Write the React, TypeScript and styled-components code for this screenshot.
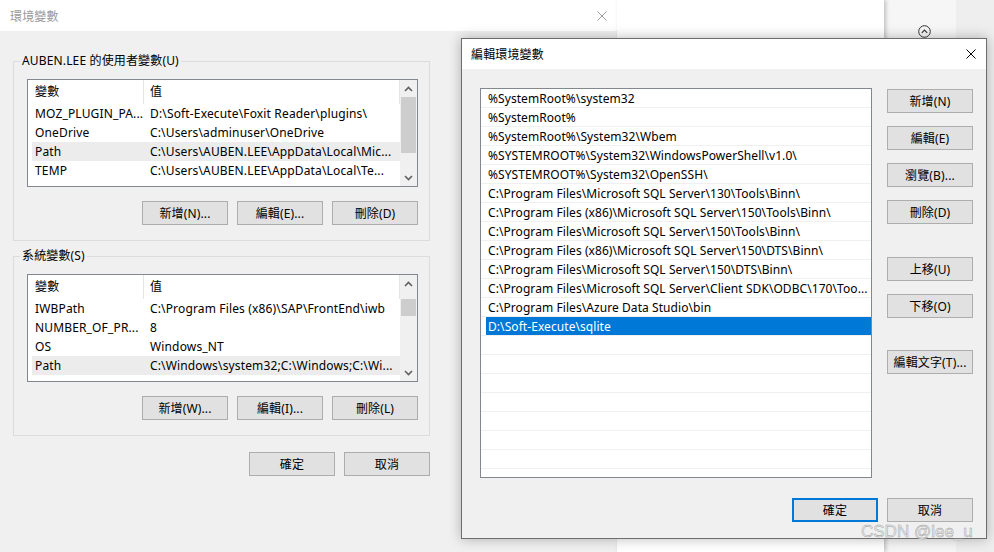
import styled, { createGlobalStyle, css } from "styled-components";

const GlobalStyle = createGlobalStyle`
  html, body { margin: 0; padding: 0; }
  body {
    width: 994px;
    height: 552px;
    overflow: hidden;
    font-family: "Noto Sans", "Noto Sans CJK TC", sans-serif;
    font-size: 12px;
    letter-spacing: 0.15px;
    color: #000;
  }
  * { box-sizing: border-box; }
`;

const Desktop = styled.div`
  position: relative;
  display: flex;
  width: 994px;
  height: 552px;
  overflow: hidden;
  background: #f0f0f0;
`;

const MainWindow = styled.div`
  width: 617px;
  flex: none;
  display: flex;
  flex-direction: column;
  background: #f0f0f0;
`;

const BackWindow = styled.div`
  position: relative;
  z-index: 1;
  width: 267px;
  flex: none;
  background: #fff;
  box-shadow: 2px 0 4px rgba(0, 0, 0, 0.22);
`;

const SidePanel = styled.div`
  flex: 1;
  display: grid;
  grid-template-columns: 72px 1fr;
`;

const SideStrip = styled.div<{ $tone: string }>`
  background: ${(p) => p.$tone};
  padding: 25px 0 0 34px;
`;

const TitleBar = styled.div<{ $height: number; $inactive?: boolean; $pad: number }>`
  height: ${(p) => p.$height}px;
  flex: none;
  display: flex;
  align-items: center;
  justify-content: space-between;
  padding: 0 10px 0 ${(p) => p.$pad}px;
  background: #fff;
  color: ${(p) => (p.$inactive ? "#999" : "#000")};
`;

const MainBody = styled.div`
  flex: 1;
  padding: 22px 0 0 13px;
`;

const Group = styled.fieldset<{ $top?: number }>`
  width: 417px;
  min-width: 0;
  margin: ${(p) => p.$top ?? 0}px 0 0 0;
  padding: 0;
  border: 1px solid #dcdcdc;
`;

const GroupLabel = styled.legend`
  margin-left: 6px;
  padding: 0 2px;
  line-height: 16px;
`;

const GroupContent = styled.div`
  padding: 10px 11px 15px 13px;
`;

const VarList = styled.div`
  display: grid;
  grid-template-columns: 1fr 17px;
  height: 108px;
  border: 1px solid #828790;
  background: #fff;
  overflow: hidden;
`;

const VarColumn = styled.div`
  display: flex;
  flex-direction: column;
  overflow: hidden;
`;

const VarHeader = styled.div`
  display: grid;
  grid-template-columns: 116px 1fr;
  height: 24px;
  line-height: 24px;
  flex: none;
`;

const HeaderCell = styled.div<{ $pad: number }>`
  padding-left: ${(p) => p.$pad}px;
  border-right: 1px solid #e5e5e5;
  white-space: nowrap;
`;

const VarRow = styled.div<{ $selected?: boolean }>`
  display: grid;
  grid-template-columns: 111px 1fr;
  height: 19px;
  line-height: 19px;
  margin-left: 4px;
  flex: none;
  background: ${(p) => (p.$selected ? "#ececec" : "transparent")};
`;

const Cell = styled.div<{ $pad: number }>`
  padding-left: ${(p) => p.$pad}px;
  white-space: nowrap;
  overflow: hidden;
`;

const ScrollTrack = styled.div`
  display: flex;
  flex-direction: column;
  background: #f0f0f0;
`;

const ScrollArrow = styled.div`
  height: 17px;
  flex: none;
  display: flex;
  align-items: center;
  justify-content: center;
`;

const ScrollSpace = styled.div`
  flex: 1;
  padding: 0 1px;
`;

const Thumb = styled.div<{ $offset: number; $size: number }>`
  margin-top: ${(p) => p.$offset}px;
  height: ${(p) => p.$size}px;
  background: #cdcdcd;
`;

const ButtonRow = styled.div<{ $top: number; $width?: number }>`
  display: flex;
  justify-content: flex-end;
  gap: 9px;
  margin-top: ${(p) => p.$top}px;
  width: ${(p) => (p.$width ? `${p.$width}px` : "auto")};
`;

const Button = styled.button<{ $default?: boolean }>`
  width: 86px;
  height: 24px;
  margin: 0;
  padding: 0;
  flex: none;
  font: inherit;
  letter-spacing: inherit;
  color: #000;
  background: #e1e1e1;
  border: 1px solid #adadad;
  white-space: nowrap;
  ${(p) =>
    p.$default &&
    css`
      border: 2px solid #0078d7;
    `}
`;

const EditDialog = styled.div`
  position: absolute;
  z-index: 2;
  left: 461px;
  top: 38px;
  width: 526px;
  height: 501px;
  display: flex;
  flex-direction: column;
  border: 1px solid #6d6d6d;
  background: #f0f0f0;
  box-shadow: 0 0 12px rgba(0, 0, 0, 0.28);
`;

const EditBody = styled.div`
  flex: 1;
  display: grid;
  grid-template-columns: 392px 86px;
  grid-template-rows: 390px auto;
  column-gap: 15px;
  padding: 19px 12px 0 18px;
`;

const PathList = styled.div`
  border: 1px solid #828790;
  background: #fff;
  overflow: hidden;
`;

const PathRow = styled.div`
  height: 19px;
  border-bottom: 1px solid #f0f0f0;
`;

const PathText = styled.div<{ $selected?: boolean }>`
  margin-left: 5px;
  height: 18px;
  line-height: 18px;
  padding: 1px 0 0 2px;
  letter-spacing: 0.07px;
  white-space: nowrap;
  overflow: hidden;
  background: ${(p) => (p.$selected ? "#0078d7" : "transparent")};
  color: ${(p) => (p.$selected ? "#fff" : "#000")};
`;

const SideButtons = styled.div`
  display: flex;
  flex-direction: column;
  padding-top: 1px;
  gap: 13px;
`;

const Spacer = styled.div<{ $size: number }>`
  height: ${(p) => p.$size}px;
  margin-top: -13px;
`;

const Footer = styled.div`
  grid-column: 1 / 3;
  display: flex;
  justify-content: flex-end;
  gap: 9px;
  margin-top: 20px;
`;

const Watermark = styled.div`
  position: absolute;
  z-index: 3;
  left: 861px;
  top: 522px;
  font-family: "Liberation Sans", Arial, sans-serif;
  font-size: 17px;
  line-height: 20px;
  letter-spacing: 0;
  color: #ececec;
  -webkit-text-stroke: 0.45px #9c9c9c;
  white-space: nowrap;
`;

function CloseIcon({ color }: { color: string }) {
  return (
    <svg width="10" height="10" viewBox="0 0 10 10">
      <path d="M0.5 0.5 L9.5 9.5 M9.5 0.5 L0.5 9.5" stroke={color} strokeWidth="1" />
    </svg>
  );
}

function Chevron({ up }: { up: boolean }) {
  return (
    <svg width="9" height="6" viewBox="0 0 9 6">
      <path
        d={up ? "M1 5 L4.5 1.5 L8 5" : "M1 1 L4.5 4.5 L8 1"}
        stroke="#606060"
        strokeWidth="1.6"
        fill="none"
      />
    </svg>
  );
}

function CircleUp() {
  return (
    <svg width="13" height="13" viewBox="0 0 13 13">
      <circle cx="6.5" cy="6.5" r="5.8" stroke="#333" strokeWidth="1" fill="none" />
      <path d="M3.8 7.8 L6.5 5 L9.2 7.8" stroke="#333" strokeWidth="1.1" fill="none" />
    </svg>
  );
}

type VarItem = { name: string; value: string; selected?: boolean };

const userVars: VarItem[] = [
  { name: "MOZ_PLUGIN_PA...", value: "D:\\Soft-Execute\\Foxit Reader\\plugins\\" },
  { name: "OneDrive", value: "C:\\Users\\adminuser\\OneDrive" },
  { name: "Path", value: "C:\\Users\\AUBEN.LEE\\AppData\\Local\\Mic...", selected: true },
  { name: "TEMP", value: "C:\\Users\\AUBEN.LEE\\AppData\\Local\\Te..." },
];

const systemVars: VarItem[] = [
  { name: "IWBPath", value: "C:\\Program Files (x86)\\SAP\\FrontEnd\\iwb" },
  { name: "NUMBER_OF_PR...", value: "8" },
  { name: "OS", value: "Windows_NT" },
  { name: "Path", value: "C:\\Windows\\system32;C:\\Windows;C:\\Wi...", selected: true },
];

const pathEntries = [
  "%SystemRoot%\\system32",
  "%SystemRoot%",
  "%SystemRoot%\\System32\\Wbem",
  "%SYSTEMROOT%\\System32\\WindowsPowerShell\\v1.0\\",
  "%SYSTEMROOT%\\System32\\OpenSSH\\",
  "C:\\Program Files\\Microsoft SQL Server\\130\\Tools\\Binn\\",
  "C:\\Program Files (x86)\\Microsoft SQL Server\\150\\Tools\\Binn\\",
  "C:\\Program Files\\Microsoft SQL Server\\150\\Tools\\Binn\\",
  "C:\\Program Files (x86)\\Microsoft SQL Server\\150\\DTS\\Binn\\",
  "C:\\Program Files\\Microsoft SQL Server\\150\\DTS\\Binn\\",
  "C:\\Program Files\\Microsoft SQL Server\\Client SDK\\ODBC\\170\\Too...",
  "C:\\Program Files\\Azure Data Studio\\bin",
  "D:\\Soft-Execute\\sqlite",
  "", "", "", "", "", "", "", "",
];

interface VariableTableProps {
  items: VarItem[];
  thumbOffset: number;
  thumbSize: number;
}

function VariableTable({ items, thumbOffset, thumbSize }: VariableTableProps) {
  return (
    <VarList>
      <VarColumn>
        <VarHeader>
          <HeaderCell $pad={7}>變數</HeaderCell>
          <HeaderCell $pad={6}>值</HeaderCell>
        </VarHeader>
        {items.map((item) => (
          <VarRow key={item.name} $selected={item.selected}>
            <Cell $pad={3}>{item.name}</Cell>
            <Cell $pad={7}>{item.value}</Cell>
          </VarRow>
        ))}
      </VarColumn>
      <ScrollTrack>
        <ScrollArrow>
          <Chevron up />
        </ScrollArrow>
        <ScrollSpace>
          <Thumb $offset={thumbOffset} $size={thumbSize} />
        </ScrollSpace>
        <ScrollArrow>
          <Chevron up={false} />
        </ScrollArrow>
      </ScrollTrack>
    </VarList>
  );
}

export default function App() {
  return (
    <>
      <GlobalStyle />
      <Desktop>
        <MainWindow>
          <TitleBar $height={31} $pad={10} $inactive>
            <span>環境變數</span>
            <CloseIcon color="#999" />
          </TitleBar>
          <MainBody>
            <Group>
              <GroupLabel>AUBEN.LEE 的使用者變數(U)</GroupLabel>
              <GroupContent>
                <VariableTable items={userVars} thumbOffset={0} thumbSize={56} />
                <ButtonRow $top={14}>
                  <Button>新增(N)...</Button>
                  <Button>編輯(E)...</Button>
                  <Button>刪除(D)</Button>
                </ButtonRow>
              </GroupContent>
            </Group>
            <Group $top={7}>
              <GroupLabel>系統變數(S)</GroupLabel>
              <GroupContent>
                <VariableTable items={systemVars} thumbOffset={7} thumbSize={17} />
                <ButtonRow $top={14}>
                  <Button>新增(W)...</Button>
                  <Button>編輯(I)...</Button>
                  <Button>刪除(L)</Button>
                </ButtonRow>
              </GroupContent>
            </Group>
            <ButtonRow $top={16} $width={417}>
              <Button>確定</Button>
              <Button>取消</Button>
            </ButtonRow>
          </MainBody>
        </MainWindow>
        <BackWindow />
        <SidePanel>
          <SideStrip $tone="#f6f6f6">
            <CircleUp />
          </SideStrip>
          <SideStrip $tone="#eeeeee" />
        </SidePanel>

        <EditDialog>
          <TitleBar $height={30} $pad={9}>
            <span>編輯環境變數</span>
            <CloseIcon color="#000" />
          </TitleBar>
          <EditBody>
            <PathList>
              {pathEntries.map((entry, i) => (
                <PathRow key={i}>
                  <PathText $selected={entry === "D:\\Soft-Execute\\sqlite"}>{entry}</PathText>
                </PathRow>
              ))}
            </PathList>
            <SideButtons>
              <Button>新增(N)</Button>
              <Button>編輯(E)</Button>
              <Button>瀏覽(B)...</Button>
              <Button>刪除(D)</Button>
              <Spacer $size={20} />
              <Button>上移(U)</Button>
              <Button>下移(O)</Button>
              <Spacer $size={19} />
              <Button>編輯文字(T)...</Button>
            </SideButtons>
            <Footer>
              <Button $default>確定</Button>
              <Button>取消</Button>
            </Footer>
          </EditBody>
        </EditDialog>
        <Watermark>CSDN @lee_u</Watermark>
      </Desktop>
    </>
  );
}
